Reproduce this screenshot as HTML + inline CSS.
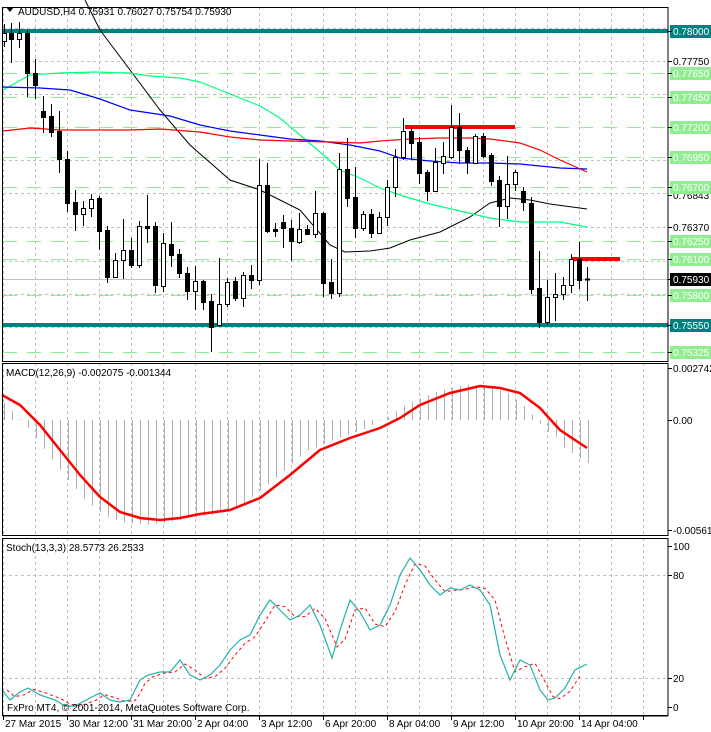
<!DOCTYPE html>
<html><head><meta charset="utf-8">
<style>
html,body{margin:0;padding:0;background:#fff;}
svg{display:block;font-family:"Liberation Sans",sans-serif;font-size:10px;}
</style></head>
<body>
<svg id="s" width="711" height="732" viewBox="0 0 711 732" xmlns="http://www.w3.org/2000/svg">
<rect width="711" height="732" fill="#fff"/>
<g id="grid"></g>
<g id="lv"></g>
<g id="ma" fill="none"></g>
<g id="cd"></g>
<g id="ind" fill="none"></g>
<g id="ax"></g>
</svg>
<script>
const NS="http://www.w3.org/2000/svg";
function el(g,t,a,txt){const e=document.createElementNS(NS,t);for(const k in a)e.setAttribute(k,a[k]);if(txt!==undefined)e.textContent=txt;document.getElementById(g).appendChild(e);return e;}
function pts(a){return a.map(p=>p.join(',')).join(' ');}
const panes=[[7,361],[363,535],[538,715]];
for(let x=3;x<668;x+=32){panes.forEach(p=>el('grid','line',{x1:x+.5,y1:p[0],x2:x+.5,y2:p[1],stroke:'#c0c0c0','stroke-dasharray':'3,3'}));}
[28,61,94,160,193,227,261,294,327].forEach(y=>el('grid','line',{x1:3,y1:y+.5,x2:668,y2:y+.5,stroke:'#c0c0c0','stroke-dasharray':'3,3'}));
[575,678].forEach(y=>el('grid','line',{x1:3,y1:y+.5,x2:668,y2:y+.5,stroke:'#c0c0c0','stroke-dasharray':'3,3'}));
[73,97,127,157,187,241,259,295,352].forEach(y=>el('lv','line',{x1:3,y1:y+.5,x2:668,y2:y+.5,stroke:'#90ee90','stroke-dasharray':'14,10'}));
el('lv','line',{x1:3,y1:279.5,x2:668,y2:279.5,stroke:'#c0c0c0'});
el('lv','rect',{x:3,y:29,width:665,height:4,fill:'#008080'});
el('lv','rect',{x:3,y:323,width:665,height:4,fill:'#008080'});
el('lv','rect',{x:405,y:125,width:110,height:4,fill:'#ff0000'});
el('lv','rect',{x:572,y:257,width:48,height:4,fill:'#ff0000'});
el('ma','polyline',{stroke:'#000',points:pts([[85,0],[100,30],[130,70],[160,110],[190,145],[230,180],[260,190],[280,200],[300,210],[330,245],[345,252],[370,251],[390,248],[410,240],[440,232],[470,217],[490,203],[510,198],[530,200],[550,204],[587,209]])});
el('ma','polyline',{stroke:'#00ff7f','stroke-width':1.2,points:pts([[3,90],[30,75],[60,73],[95,72],[130,73],[150,76],[180,78],[200,82],[220,90],[240,98],[260,106],[280,118],[300,135],[320,152],[340,170],[360,178],[380,188],[400,195],[430,204],[460,211],[490,218],[520,222],[560,222],[587,227]])});
el('ma','polyline',{stroke:'#0000ff','stroke-width':1.2,points:pts([[3,87],[40,88],[70,90],[100,99],[130,110],[170,116],[200,125],[230,131],[260,135],[290,139],[320,141],[350,145],[380,151],[400,158],[430,161],[460,163],[490,163],[520,164],[560,168],[587,169]])});
el('ma','polyline',{stroke:'#ff0000','stroke-width':1.2,points:pts([[3,131],[30,128],[60,130],[100,130],[130,130],[160,129],[200,132],[230,137],[260,140],[290,141],[330,142],[360,143],[380,141],[410,139],[440,138],[470,138],[490,139],[520,143],[540,150],[560,160],[587,172]])});
const C=[[4,33,41,24,47,1],[11,33,39,23,63,0],[19,33,39,22,48,1],[27,33,73,30,97,0],[35,73,85,59,99,0],[43,111,117,96,133,0],[51,116,132,104,137,0],[59,131,159,111,173,0],[67,159,203,151,212,0],[75,202,214,190,231,0],[83,208,214,201,226,1],[91,199,208,194,217,1],[99,198,231,196,250,0],[107,230,277,226,283,0],[115,260,277,253,278,1],[123,250,260,219,279,1],[131,250,265,238,268,0],[139,226,265,221,268,1],[147,226,228,195,243,0],[155,226,285,222,293,0],[163,243,286,233,292,1],[171,244,255,222,267,0],[179,254,273,249,278,0],[187,273,291,267,300,0],[195,281,291,266,310,1],[203,281,302,280,310,0],[211,301,327,294,352,0],[219,304,325,258,325,1],[227,282,304,278,307,1],[235,281,298,277,301,0],[243,275,298,272,307,1],[251,275,280,265,289,0],[259,185,280,159,285,1],[267,185,231,163,233,0],[275,229,231,223,237,0],[283,222,228,215,248,0],[291,228,241,220,261,0],[299,229,242,213,244,1],[307,229,234,225,235,0],[315,213,234,191,238,1],[323,213,283,212,297,0],[331,282,293,259,299,0],[339,169,293,153,297,1],[347,169,198,138,207,0],[355,197,228,167,238,0],[363,214,228,211,231,1],[371,214,233,209,238,0],[379,217,233,212,234,1],[387,187,217,180,226,1],[395,157,187,149,197,1],[403,131,157,118,160,1],[411,131,143,127,160,0],[419,142,173,137,184,0],[427,172,191,170,201,0],[435,162,191,148,192,1],[443,156,163,142,174,1],[451,127,157,105,159,1],[459,127,150,113,164,0],[467,150,162,147,174,0],[475,136,163,134,164,1],[483,136,156,133,158,0],[491,155,181,153,186,0],[499,180,206,176,227,0],[507,184,206,156,219,1],[515,172,184,170,191,1],[523,191,202,187,211,0],[531,203,289,197,294,0],[539,288,322,251,328,0],[547,297,322,280,325,1],[555,294,297,273,321,1],[563,285,294,277,300,1],[571,259,285,254,293,1],[579,259,280,242,289,0],[587,279,280,267,301,0]];
C.forEach(c=>{const[x,t,b,h,l,w]=c;el('cd','line',{x1:x+.5,y1:h,x2:x+.5,y2:l,stroke:'#000'});
 if(b-t<2)el('cd','line',{x1:x-2,y1:t+.5,x2:x+3,y2:t+.5,stroke:'#000','stroke-width':2});
 else el('cd','rect',{x:x-1.5,y:t+.5,width:4,height:b-t,fill:w?'#fff':'#000',stroke:'#000'});});
const sig=[[2,395],[20,405],[40,425],[60,450],[80,475],[100,497],[120,512],[140,518],[160,520],[180,518],[200,514],[230,510],[260,498],[290,475],[320,450],[350,438],[380,428],[400,418],[420,405],[450,393],[480,386],[500,388],[520,393],[540,408],[560,430],[587,448]];
function interp(a,x){if(x<=a[0][0])return a[0][1];for(let i=1;i<a.length;i++){if(x<=a[i][0]){const t=(x-a[i-1][0])/(a[i][0]-a[i-1][0]);return a[i-1][1]+t*(a[i][1]-a[i-1][1]);}}return a[a.length-1][1];}
for(let x=4;x<=588;x+=8){let v=interp(sig,x+14)-420;v*=1.05;if(x>560)v=interp(sig,x)-420+15;
 el('ind','line',{x1:x+.5,y1:420,x2:x+.5,y2:420+v,stroke:'#b0b0b0'});}
el('ind','polyline',{stroke:'#ff0000','stroke-width':2.5,points:pts(sig)});
const st=[[2,690],[10,700],[20,692],[28,688],[40,695],[55,700],[65,706],[75,706],[90,698],[100,693],[110,700],[120,702],[130,700],[135,690],[140,680],[148,675],[160,672],[170,672],[180,660],[190,675],[200,680],[210,675],[220,665],[230,650],[240,640],[250,635],[260,615],[270,600],[280,610],[290,620],[300,615],[310,605],[320,625],[332,658],[340,630],[350,600],[360,612],[370,630],[380,625],[390,605],[400,575],[410,558],[420,570],[430,585],[440,595],[450,588],[460,590],[470,585],[480,590],[490,605],[500,655],[510,680],[520,660],[530,665],[540,690],[548,700],[555,698],[565,688],[575,670],[587,664]];
const ss=st.map(p=>[p[0]+5,p[1]]);ss.pop();
el('ind','polyline',{stroke:'#ff0000','stroke-dasharray':'3,3',points:pts(ss.map((p,i)=>[p[0],i>0?(p[1]*2+ss[i-1][1])/3:p[1]]))});
el('ind','polyline',{stroke:'#20b2aa','stroke-width':1.2,points:pts(st)});
panes.forEach(p=>el('ax','rect',{x:2.5,y:p[0]+.5,width:665.5,height:p[1]-p[0],fill:'none',stroke:'#000'}));
el('ax','line',{x1:2.5,y1:716,x2:668,y2:716,stroke:'#000'});
for(let x=3;x<668;x+=64)el('ax','line',{x1:x+.5,y1:716,x2:x+.5,y2:720,stroke:'#000'});
function lab(y,t,bg,fg){if(bg)el('ax','rect',{x:670,y:y-6,width:41,height:13,fill:bg});el('ax','line',{x1:668,y1:y+.5,x2:672,y2:y+.5,stroke:'#000'});el('ax','text',{x:673,y:y+4,fill:fg||'#000'},t);}
lab(61,'0.77750');lab(227,'0.76370');lab(195,'0.76843');
lab(73,'0.77650','#90ee90','#fff');lab(97,'0.77450','#90ee90','#fff');lab(127,'0.77200','#90ee90','#fff');lab(157,'0.76950','#90ee90','#fff');lab(187,'0.76700','#90ee90','#fff');lab(241,'0.76250','#90ee90','#fff');lab(259,'0.76100','#90ee90','#fff');lab(295,'0.75800','#90ee90','#fff');lab(352,'0.75325','#90ee90','#fff');
lab(31,'0.78000','#008080','#fff');lab(325,'0.75550','#008080','#fff');lab(279,'0.75930','#000','#fff');
lab(368,'0.002742');lab(420,'0.00');lab(530,'-0.005617');
lab(546,'100');lab(575,'80');lab(678,'20');lab(707,'0');
el('ax','path',{d:'M6 7 L14 7 L10 12 Z',fill:'#000'});
el('ax','text',{x:18,y:15},'AUDUSD,H4  0.75931 0.76027 0.75754 0.75930');
el('ax','text',{x:6,y:376},'MACD(12,26,9) -0.002075 -0.001344');
el('ax','text',{x:6,y:551},'Stoch(13,3,3) 28.5773 26.2533');
el('ax','text',{x:7,y:711},'FxPro MT4, © 2001-2014, MetaQuotes Software Corp.');
const tl=[[3,'27 Mar 2015'],[67,'30 Mar 12:00'],[131,'31 Mar 20:00'],[195,'2 Apr 04:00'],[259,'3 Apr 12:00'],[323,'6 Apr 20:00'],[387,'8 Apr 04:00'],[451,'9 Apr 12:00'],[515,'10 Apr 20:00'],[579,'14 Apr 04:00']];
tl.forEach(t=>el('ax','text',{x:t[0]+2,y:727},t[1]));
</script>
</body></html>
